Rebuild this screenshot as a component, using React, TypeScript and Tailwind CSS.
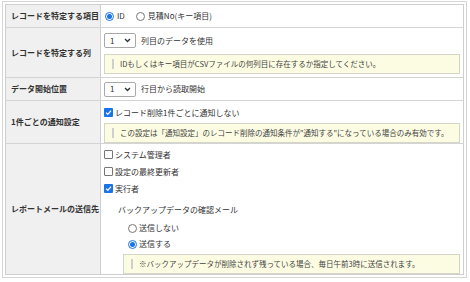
import React from "react";

const font = { fontFamily: '"Noto Sans CJK JP", "Noto Sans", sans-serif' };

function Radio({ checked }: { checked?: boolean }) {
  return checked ? (
    <span className="inline-flex h-[9px] w-[9px] items-center justify-center rounded-full border border-[#1a73e8] bg-white shrink-0">
      <span className="h-[5px] w-[5px] rounded-full bg-[#1a73e8]" />
    </span>
  ) : (
    <span className="inline-block h-[9px] w-[9px] rounded-full border border-[#777] bg-white shrink-0" />
  );
}

function Check({ checked }: { checked?: boolean }) {
  return checked ? (
    <span className="inline-flex h-[9px] w-[9px] items-center justify-center rounded-[1px] bg-[#1a73e8] shrink-0">
      <svg width="7" height="7" viewBox="0 0 10 10">
        <path d="M1.5 5.2 L4 7.6 L8.6 2.4" stroke="white" strokeWidth="1.8" fill="none" />
      </svg>
    </span>
  ) : (
    <span className="inline-block h-[9px] w-[9px] rounded-[1px] border border-[#767676] bg-white shrink-0" />
  );
}

function Select() {
  return (
    <div className="flex h-[15px] w-[32px] items-center justify-between rounded-[2px] border border-[#a9a9a9] bg-white pl-[5px] pr-[4px] text-[8px] text-[#333]">
      <span>1</span>
      <svg width="7" height="5" viewBox="0 0 10 7">
        <path d="M1.5 1.5 L5 5 L8.5 1.5" stroke="#333" strokeWidth="2" fill="none" />
      </svg>
    </div>
  );
}

function Note({ children }: { children: React.ReactNode }) {
  return (
    <div className="flex h-[20px] items-center border border-[#d5d5c8] bg-[#fcfce3] pl-[7px] text-[7.5px] text-[#444]">
      <span className="mr-[6px] h-[10px] w-[2px] bg-[#cfcfcf] shrink-0" />
      <span className="whitespace-nowrap">{children}</span>
    </div>
  );
}

function Label({ children }: { children: React.ReactNode }) {
  return (
    <div className="flex items-center border-r border-[#cfcfcf] bg-[#f0f0f0] pl-[5px] text-[8px] font-bold text-[#333] whitespace-nowrap">
      {children}
    </div>
  );
}

export default function App() {
  return (
    <div className="h-[282px] w-[470px] bg-white pl-[2px] pt-[1px]" style={font}>
      <div className="w-[465px] border border-[#d6d6d6] p-[2px]">
        <div className="border border-[#cfcfcf] text-[8px] text-[#333]">
          {/* row 1 */}
          <div className="grid h-[23px] grid-cols-[95px_1fr] border-b border-[#d4d4d4]">
            <Label>レコードを特定する項目</Label>
            <div className="flex items-center gap-[3px] pl-[4px]">
              <Radio checked />
              <span className="mr-[8px]">ID</span>
              <Radio />
              <span>見積No(キー項目)</span>
            </div>
          </div>
          {/* row 2 */}
          <div className="grid h-[50px] grid-cols-[95px_1fr] border-b border-[#d4d4d4]">
            <Label>レコードを特定する列</Label>
            <div className="flex flex-col gap-[6px] px-[3px] pt-[5px]">
              <div className="flex items-center gap-[5px]">
                <Select />
                <span>列目のデータを使用</span>
              </div>
              <Note>IDもしくはキー項目がCSVファイルの何列目に存在するか指定してください。</Note>
            </div>
          </div>
          {/* row 3 */}
          <div className="grid h-[23px] grid-cols-[95px_1fr] border-b border-[#d4d4d4]">
            <Label>データ開始位置</Label>
            <div className="flex items-center gap-[5px] px-[3px]">
              <Select />
              <span>行目から読取開始</span>
            </div>
          </div>
          {/* row 4 */}
          <div className="grid h-[43px] grid-cols-[95px_1fr] border-b border-[#d4d4d4]">
            <Label>1件ごとの通知設定</Label>
            <div className="flex flex-col gap-[3px] px-[3px] pt-[4px]">
              <div className="flex h-[15px] items-center gap-[2px]">
                <Check checked />
                <span>レコード削除1件ごとに通知しない</span>
              </div>
              <Note>この設定は「通知設定」のレコード削除の通知条件が"通知する"になっている場合のみ有効です。</Note>
            </div>
          </div>
          {/* row 5 */}
          <div className="grid h-[130px] grid-cols-[95px_1fr]">
            <Label>レポートメールの送信先</Label>
            <div className="flex flex-col px-[3px] pt-[2px]">
              <div className="flex h-[17px] items-center gap-[2px]">
                <Check />
                <span>システム管理者</span>
              </div>
              <div className="flex h-[17px] items-center gap-[2px]">
                <Check />
                <span>設定の最終更新者</span>
              </div>
              <div className="flex h-[17px] items-center gap-[2px]">
                <Check checked />
                <span>実行者</span>
              </div>
              <div className="mt-[4px] flex h-[17px] items-center pl-[14px]">
                <span>バックアップデータの確認メール</span>
              </div>
              <div className="mt-[2px] flex h-[16px] items-center gap-[2px] pl-[24px]">
                <Radio />
                <span>送信しない</span>
              </div>
              <div className="flex h-[16px] items-center gap-[2px] pl-[24px]">
                <Radio checked />
                <span>送信する</span>
              </div>
              <div className="ml-[19px] mt-[2px]">
                <Note>※バックアップデータが削除されず残っている場合、毎日午前3時に送信されます。</Note>
              </div>
            </div>
          </div>
        </div>
      </div>
    </div>
  );
}
